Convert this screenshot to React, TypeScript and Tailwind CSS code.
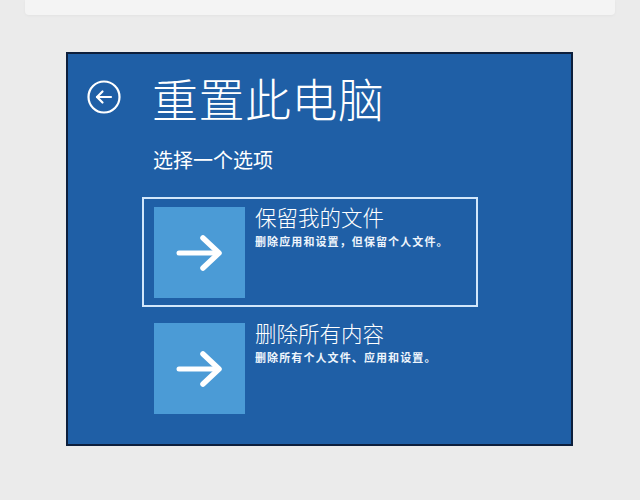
import React from "react";

const font = { fontFamily: '"Noto Sans CJK SC", "Noto Sans", sans-serif' };

function Arrow() {
  return (
    <svg width="48" height="40" viewBox="0 0 48 40" fill="none">
      <path d="M3 20 H42" stroke="white" strokeWidth="5" strokeLinecap="round" />
      <path d="M27 5 L43 20 L27 35" stroke="white" strokeWidth="5.5" strokeLinecap="round" strokeLinejoin="round" />
    </svg>
  );
}

function Option({ title, desc, selected }: { title: string; desc: string; selected?: boolean }) {
  return (
    <div
      className={`flex w-[336px] h-[110px] border-2 pt-[8px] pl-[10px] gap-[10px] ${
        selected ? "border-[#d2e7fb]" : "border-transparent"
      }`}
    >
      <div className="w-[91px] h-[91px] bg-[#4b9bd6] flex items-center justify-center shrink-0">
        <Arrow />
      </div>
      <div className="flex flex-col text-white">
        <div className="text-[21.5px] leading-[26px] -mt-[3px] font-light">{title}</div>
        <div className="text-[11px] leading-[16px] font-bold tracking-[1.1px] mt-[3px] text-[#eef5fc]">{desc}</div>
      </div>
    </div>
  );
}

export default function App() {
  return (
    <div className="w-[640px] h-[500px] bg-[#ebebeb] overflow-hidden" style={font}>
      <div className="h-[15px] mx-[25px] bg-[#f4f4f4] rounded-b-[4px] shadow-[0_1px_3px_rgba(0,0,0,0.04)]" />
      <div className="ml-[66px] mt-[37px] w-[507px] h-[394px] border-2 border-[#0d1f3c] bg-[#1f5fa6] flex flex-col">
        <div className="flex items-center mt-[18px] ml-[19px]">
          <svg width="34" height="34" viewBox="0 0 34 34" fill="none">
            <circle cx="17" cy="17" r="15.5" stroke="white" strokeWidth="2.2" />
            <path d="M10 17 H24" stroke="white" strokeWidth="2.2" strokeLinecap="round" />
            <path d="M15.5 11.5 L10 17 L15.5 22.5" stroke="white" strokeWidth="2.2" strokeLinecap="round" strokeLinejoin="round" />
          </svg>
          <div className="ml-[31px] text-white text-[46px] leading-[50px] font-light tracking-[0.5px]">重置此电脑</div>
        </div>
        <div className="ml-[85px] mt-[26px] text-white text-[20px] leading-[24px]">选择一个选项</div>
        <div className="ml-[74px] mt-[25px] flex flex-col gap-[6px]">
          <Option title="保留我的文件" desc="删除应用和设置，但保留个人文件。" selected />
          <Option title="删除所有内容" desc="删除所有个人文件、应用和设置。" />
        </div>
      </div>
    </div>
  );
}
